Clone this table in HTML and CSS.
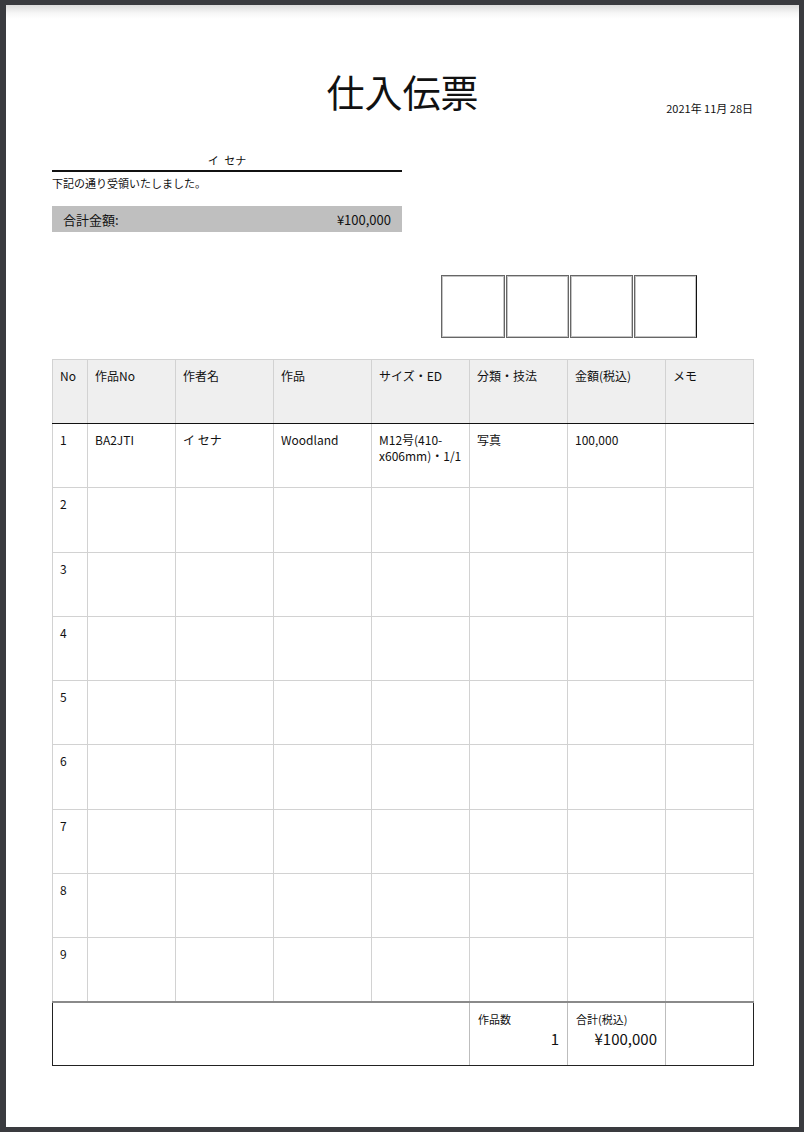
FILE: index.html
```html
<!DOCTYPE html>
<html lang="ja">
<head>
<meta charset="utf-8">
<title>仕入伝票</title>
<link rel="stylesheet" href="styles.css">
</head>
<body>
<div class="page">
  <header class="header">
    <div></div>
    <h1 class="title">仕入伝票</h1>
    <div class="date">2021年 11月 28日</div>
  </header>

  <section class="recipient">
    <div class="recipient-name">イ セナ</div>
    <div class="recipient-note">下記の通り受領いたしました。</div>
    <div class="total-box">
      <span>合計金額:</span>
      <span>¥100,000</span>
    </div>
  </section>

  <div class="stamps">
    <div class="stamp"></div>
    <div class="stamp"></div>
    <div class="stamp"></div>
    <div class="stamp"></div>
  </div>

  <table class="slip">
    <colgroup>
      <col class="c-no"><col class="c-narrow"><col class="c-wide"><col class="c-wide"><col class="c-wide"><col class="c-wide"><col class="c-wide"><col class="c-narrow">
    </colgroup>
    <thead>
      <tr>
        <th>No</th><th>作品No</th><th>作者名</th><th>作品</th><th>サイズ・ED</th><th>分類・技法</th><th>金額(税込)</th><th>メモ</th>
      </tr>
    </thead>
    <tbody>
      <tr><td>1</td><td>BA2JTI</td><td>イ セナ</td><td>Woodland</td><td>M12号(410-x606mm)・1/1</td><td>写真</td><td>100,000</td><td></td></tr>
      <tr><td>2</td><td></td><td></td><td></td><td></td><td></td><td></td><td></td></tr>
      <tr><td>3</td><td></td><td></td><td></td><td></td><td></td><td></td><td></td></tr>
      <tr><td>4</td><td></td><td></td><td></td><td></td><td></td><td></td><td></td></tr>
      <tr><td>5</td><td></td><td></td><td></td><td></td><td></td><td></td><td></td></tr>
      <tr><td>6</td><td></td><td></td><td></td><td></td><td></td><td></td><td></td></tr>
      <tr><td>7</td><td></td><td></td><td></td><td></td><td></td><td></td><td></td></tr>
      <tr><td>8</td><td></td><td></td><td></td><td></td><td></td><td></td><td></td></tr>
      <tr><td>9</td><td></td><td></td><td></td><td></td><td></td><td></td><td></td></tr>
    </tbody>
    <tfoot>
      <tr>
        <td colspan="5" class="foot-blank"></td>
        <td class="foot-cell"><div class="foot-label">作品数</div><div class="foot-value">1</div></td>
        <td class="foot-cell"><div class="foot-label">合計(税込)</div><div class="foot-value">¥100,000</div></td>
        <td class="foot-cell"></td>
      </tr>
    </tfoot>
  </table>
</div>
</body>
</html>
```

FILE: styles.css
```css
html, body {
  margin: 0;
  padding: 0;
}

body {
  background: #3a3b3f;
  font-family: "Noto Sans CJK JP", "Noto Sans", sans-serif;
  color: #111;
  width: 804px;
  height: 1132px;
  overflow: hidden;
}

.page {
  box-sizing: border-box;
  width: 793px;
  height: 1122px;
  margin: 5px 5px 5px 6px;
  padding: 61px 46px 0 46px;
  background: linear-gradient(#dcdcdc 0, #f6f6f6 8px, #ffffff 14px);
}

.header {
  display: grid;
  grid-template-columns: 1fr auto 1fr;
  align-items: end;
}

.title {
  margin: 0;
  font-size: 38px;
  font-weight: 400;
  line-height: 49px;
  letter-spacing: 0;
}

.date {
  justify-self: end;
  font-size: 11px;
  line-height: 16px;
  margin-bottom: -1px;
}

.recipient {
  width: 350px;
  margin-top: 35px;
}

.recipient-name {
  font-size: 11px;
  line-height: 20px;
  text-align: center;
  border-bottom: 2px solid #111;
  word-spacing: 3px;
}

.recipient-note {
  font-size: 11px;
  line-height: 18px;
  padding-top: 2px;
}

.total-box {
  margin-top: 14px;
  height: 26px;
  padding: 0 11px;
  background: #bfbfbf;
  display: flex;
  align-items: center;
  justify-content: space-between;
  font-size: 13px;
}

.stamps {
  display: flex;
  justify-content: flex-end;
  gap: 1px;
  margin-top: 43px;
  padding-right: 56px;
}

.stamp {
  box-sizing: border-box;
  width: 63px;
  height: 63px;
  border: 1px solid #666;
  box-shadow: inset 0 0 0 1px #c4c4c4;
}

.stamp:first-child {
  width: 64px;
}

.stamp:last-child {
  border-right-color: #111;
}

.slip {
  margin-top: 21px;
  width: 701px;
  border-collapse: collapse;
  table-layout: fixed;
  font-size: 12px;
  line-height: 16px;
}

.c-no { width: 35px; }
.c-narrow { width: 88px; }
.c-wide { width: 98px; }

.slip th,
.slip td {
  border: 1px solid #d2d2d2;
  padding: 8px 7px 9px;
  text-align: left;
  vertical-align: top;
  font-weight: 400;
  height: 46.25px;
  overflow-wrap: anywhere;
}

.slip thead th {
  background: #efefef;
  border-bottom: 1px solid #111;
  height: 46px;
}

.slip tfoot td {
  border-top: 2px solid #8a8a8a;
  border-bottom: 1px solid #222;
  border-left: 1px solid #bdbdbd;
  border-right: 1px solid #bdbdbd;
  padding: 8px 8px 8px;
  height: 46px;
}

.slip tfoot td.foot-blank {
  border-left: 1px solid #222;
}

.slip tfoot td:last-child {
  border-right: 1px solid #222;
}

.foot-label {
  font-size: 11px;
  line-height: 16px;
}

.foot-value {
  font-size: 15px;
  line-height: 24px;
  text-align: right;
}
```
